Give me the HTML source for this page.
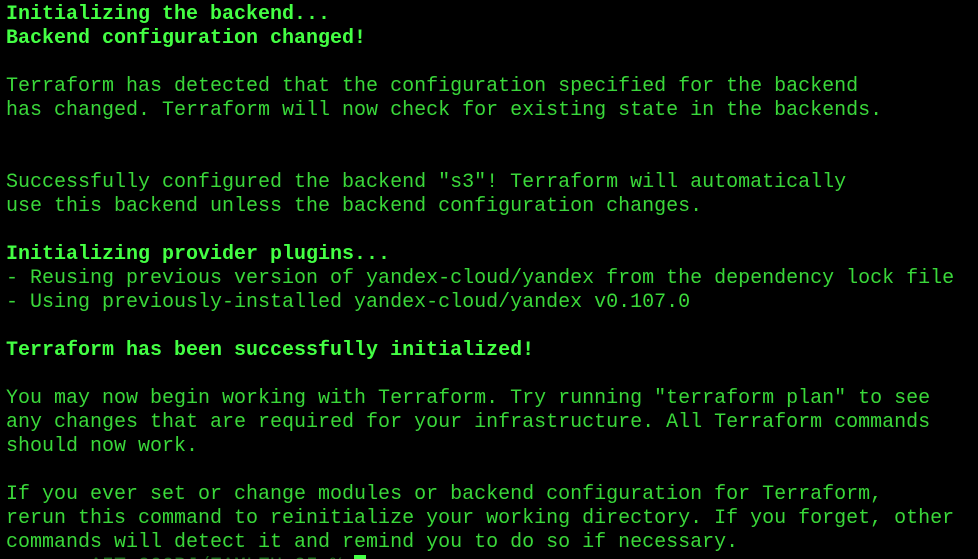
<!DOCTYPE html>
<html><head><style>
html,body{margin:0;padding:0;background:#000;width:978px;height:559px;overflow:hidden}
pre{margin:0;padding:0 0 0 6px;font-family:"Liberation Mono",monospace;font-size:20px;line-height:24px;color:#3ad83a;position:relative;top:3px}
b{color:#44ff44;font-weight:bold}
.c{display:inline-block;width:12px;height:18px;background:#44ff44;vertical-align:-2px}
</style></head><body><pre><b>Initializing the backend...</b>
<b>Backend configuration changed!</b>

Terraform has detected that the configuration specified for the backend
has changed. Terraform will now check for existing state in the backends.


Successfully configured the backend "s3"! Terraform will automatically
use this backend unless the backend configuration changes.

<b>Initializing provider plugins...</b>
- Reusing previous version of yandex-cloud/yandex from the dependency lock file
- Using previously-installed yandex-cloud/yandex v0.107.0

<b>Terraform has been successfully initialized!</b>

You may now begin working with Terraform. Try running "terraform plan" to see
any changes that are required for your infrastructure. All Terraform commands
should now work.

If you ever set or change modules or backend configuration for Terraform,
rerun this command to reinitialize your working directory. If you forget, other
commands will detect it and remind you to do so if necessary.
<span style="color:#1a6a1a">     ~ AIT-O0OPJ/ZAMLZU-O5 % </span><span class="c"></span></pre></body></html>
